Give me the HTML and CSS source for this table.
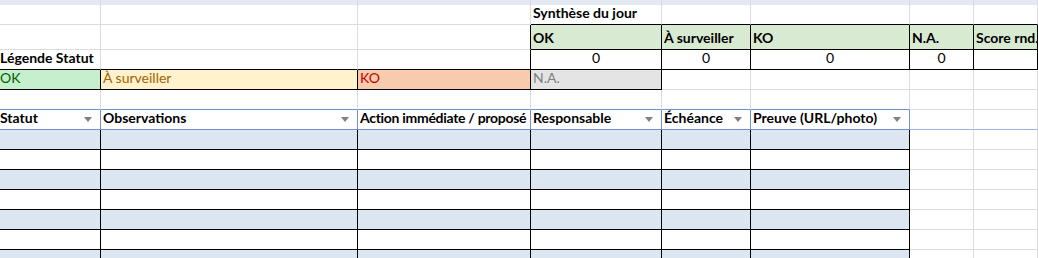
FILE: index.html
```html
<!DOCTYPE html>
<html lang="fr">
<head>
    <meta charset="UTF-8">
    <meta name="viewport" content="width=device-width, initial-scale=1.0">
    <title>Contrôle journalier</title>
    <link rel="stylesheet" href="styles.css">
</head>
<body>
    <div class="sheet">
        <!-- bande du haut -->
        <div class="cell band"></div><div class="cell band"></div><div class="cell band"></div><div class="cell band"></div><div class="cell band"></div><div class="cell band"></div><div class="cell band"></div><div class="cell band"></div>

        <!-- titre synthèse -->
        <div class="cell first"></div>
        <div class="cell"></div>
        <div class="cell"></div>
        <div class="cell bold line-b">Synthèse du jour</div>
        <div class="cell line-b"></div>
        <div class="cell line-b"></div>
        <div class="cell line-b"></div>
        <div class="cell line-b"></div>

        <!-- en-têtes synthèse -->
        <div class="cell first"></div>
        <div class="cell"></div>
        <div class="cell line-r"></div>
        <div class="cell boxed sum-head">OK</div>
        <div class="cell boxed sum-head">À surveiller</div>
        <div class="cell boxed sum-head">KO</div>
        <div class="cell boxed sum-head">N.A.</div>
        <div class="cell boxed sum-head">Score rnd.</div>

        <!-- compteurs + légende -->
        <div class="cell first bold line-b">Légende Statut</div>
        <div class="cell line-b"></div>
        <div class="cell line-b line-r"></div>
        <div class="cell boxed center" id="countOk">0</div>
        <div class="cell boxed center" id="countWatch">0</div>
        <div class="cell boxed center" id="countKo">0</div>
        <div class="cell boxed center" id="countNa">0</div>
        <div class="cell boxed center" id="score"></div>

        <!-- pastilles de statut -->
        <div class="cell first boxed st-ok">OK</div>
        <div class="cell boxed st-watch">À surveiller</div>
        <div class="cell boxed st-ko">KO</div>
        <div class="cell boxed st-na">N.A.</div>
        <div class="cell"></div>
        <div class="cell"></div>
        <div class="cell"></div>
        <div class="cell"></div>

        <!-- ligne vide au-dessus du tableau -->
        <div class="cell first tbl-top"></div>
        <div class="cell tbl-top"></div>
        <div class="cell tbl-top"></div>
        <div class="cell tbl-top"></div>
        <div class="cell tbl-top"></div>
        <div class="cell tbl-top"></div>
        <div class="cell"></div>
        <div class="cell"></div>

        <!-- en-têtes du tableau -->
        <div class="cell first bold tbl-head">Statut<svg class="filter" viewBox="0 0 8 5"><polygon points="0,0 8,0 4,5"/></svg></div>
        <div class="cell bold tbl-head">Observations<svg class="filter" viewBox="0 0 8 5"><polygon points="0,0 8,0 4,5"/></svg></div>
        <div class="cell bold tbl-head tight">Action immédiate / proposé</div>
        <div class="cell bold tbl-head">Responsable<svg class="filter" viewBox="0 0 8 5"><polygon points="0,0 8,0 4,5"/></svg></div>
        <div class="cell bold tbl-head">Échéance<svg class="filter" viewBox="0 0 8 5"><polygon points="0,0 8,0 4,5"/></svg></div>
        <div class="cell bold tbl-head">Preuve (URL/photo)<svg class="filter" viewBox="0 0 8 5"><polygon points="0,0 8,0 4,5"/></svg></div>
        <div class="cell tbl-edge"></div>
        <div class="cell tbl-edge"></div>

        <!-- lignes de saisie -->
        <div class="cell first boxed stripe"></div><div class="cell boxed stripe"></div><div class="cell boxed stripe"></div><div class="cell boxed stripe"></div><div class="cell boxed stripe"></div><div class="cell boxed stripe"></div><div class="cell"></div><div class="cell"></div>
        <div class="cell first boxed"></div><div class="cell boxed"></div><div class="cell boxed"></div><div class="cell boxed"></div><div class="cell boxed"></div><div class="cell boxed"></div><div class="cell"></div><div class="cell"></div>
        <div class="cell first boxed stripe"></div><div class="cell boxed stripe"></div><div class="cell boxed stripe"></div><div class="cell boxed stripe"></div><div class="cell boxed stripe"></div><div class="cell boxed stripe"></div><div class="cell"></div><div class="cell"></div>
        <div class="cell first boxed"></div><div class="cell boxed"></div><div class="cell boxed"></div><div class="cell boxed"></div><div class="cell boxed"></div><div class="cell boxed"></div><div class="cell"></div><div class="cell"></div>
        <div class="cell first boxed stripe"></div><div class="cell boxed stripe"></div><div class="cell boxed stripe"></div><div class="cell boxed stripe"></div><div class="cell boxed stripe"></div><div class="cell boxed stripe"></div><div class="cell"></div><div class="cell"></div>
        <div class="cell first boxed"></div><div class="cell boxed"></div><div class="cell boxed"></div><div class="cell boxed"></div><div class="cell boxed"></div><div class="cell boxed"></div><div class="cell"></div><div class="cell"></div>
        <div class="cell first boxed stripe"></div><div class="cell boxed stripe"></div><div class="cell boxed stripe"></div><div class="cell boxed stripe"></div><div class="cell boxed stripe"></div><div class="cell boxed stripe"></div><div class="cell"></div><div class="cell"></div>
    </div>
</body>
</html>
```

FILE: styles.css
```css
body, html {
    margin: 0;
    padding: 0;
    background-color: #fff;
    overflow: hidden;
}

.sheet {
    display: grid;
    grid-template-columns: 101px 257px 173px 131px 89px 159px 64px 64px;
    grid-template-rows: 5px 20px 25px 20px 20px 20px 20px;
    grid-auto-rows: 20px;
    font-family: Lato, "Liberation Sans", sans-serif;
    font-size: 14px;
    color: #000;
}

.cell {
    box-sizing: border-box;
    display: flex;
    align-items: flex-end;
    padding: 0 2px 3px;
    line-height: 16px;
    white-space: nowrap;
    overflow: hidden;
    border-right: 1px solid #dcdcdc;
    border-bottom: 1px solid #dcdcdc;
}

.cell.first {
    padding-left: 0;
}

.band {
    background-color: #e3e9f3;
    border-bottom: none;
    border-right-color: #d6dce6;
}

.bold {
    font-weight: bold;
}

.center {
    justify-content: center;
}

.tight {
    padding-right: 0;
    letter-spacing: -0.3px;
}

.line-b {
    border-bottom-color: #000;
}

.line-r {
    border-right-color: #000;
}

.boxed {
    border-right-color: #000;
    border-bottom-color: #000;
}

.sum-head {
    background-color: #d9ead3;
    font-weight: bold;
}

/* légende des statuts */
.st-ok {
    background-color: #c6efce;
    color: #006100;
}

.st-watch {
    background-color: #fff2cc;
    color: #9c6500;
}

.st-ko {
    background-color: #f8cbad;
    color: #c00000;
}

.st-na {
    background-color: #e4e4e4;
    color: #808080;
}

/* tableau de suivi */
.tbl-top {
    border-bottom-color: #6f92cc;
}

.tbl-head {
    border-right-color: #6f92cc;
    border-bottom-color: #6f92cc;
}

.tbl-edge {
    border-bottom-color: #9db7e0;
}

.filter {
    width: 8px;
    height: 5px;
    margin-left: auto;
    margin-right: 6px;
    margin-bottom: 4px;
    flex-shrink: 0;
    fill: #808080;
}

.stripe {
    background-color: #dce6f1;
}
```
